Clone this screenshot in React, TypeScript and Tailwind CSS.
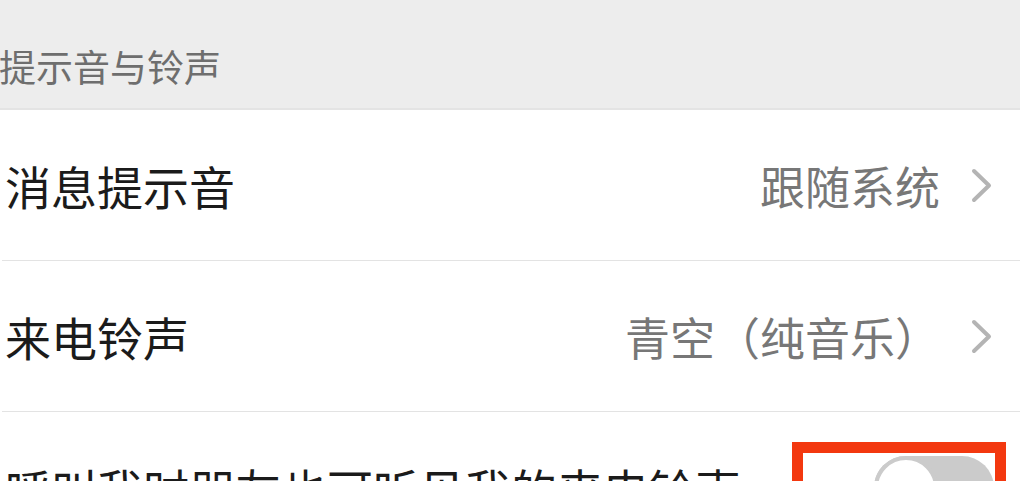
import React from "react";

const font = { fontFamily: '"Noto Sans CJK SC", "Noto Sans", sans-serif' };

function Chevron() {
  return (
    <svg width="21" height="35" viewBox="0 0 21 35" className="shrink-0">
      <polyline points="3,3 18,17.5 3,32" fill="none" stroke="#b4b4b4" strokeWidth="4" strokeLinecap="round" strokeLinejoin="round" />
    </svg>
  );
}

function LinkRow({ label, value }: { label: string; value: string }) {
  return (
    <div className="flex h-[151px] items-center justify-between border-b border-[#e3e3e3] ml-[2px] pl-[3px] pr-[28px]">
      <span className="text-[46px] leading-none text-[#1b1b1b]">{label}</span>
      <div className="flex items-center gap-[31px]">
        <span className="text-[45px] leading-none text-[#777777]">{value}</span>
        <Chevron />
      </div>
    </div>
  );
}

export default function App() {
  return (
    <div className="w-[1020px] h-[481px] overflow-hidden bg-white" style={font}>
      {/* Section header */}
      <div className="h-[110px] bg-[#ededed] border-b-2 border-[#e4e4e4] pt-[48px]">
        <span className="block text-[37px] leading-none text-[#6e6e6e] -ml-[1px]">提示音与铃声</span>
      </div>

      <LinkRow label="消息提示音" value="跟随系统" />
      <LinkRow label="来电铃声" value="青空（纯音乐）" />

      {/* Toggle row */}
      <div className="flex h-[151px] items-center justify-between ml-[2px] pl-[3px] pr-[14px]">
        <span className="text-[46px] leading-none text-[#1b1b1b]">呼叫我时朋友也可听见我的来电铃声</span>
        <div className="flex items-center justify-end w-[214px] h-[92px] border-[11px] border-[#f3380f] pr-[1px]">
          <div className="relative w-[120px] h-[64px] rounded-full bg-[#cbcbcb]">
            <div className="absolute left-0 top-0 w-[64px] h-[64px] rounded-full bg-white border-[4px] border-[#cbcbcb]" />
          </div>
        </div>
      </div>
    </div>
  );
}
